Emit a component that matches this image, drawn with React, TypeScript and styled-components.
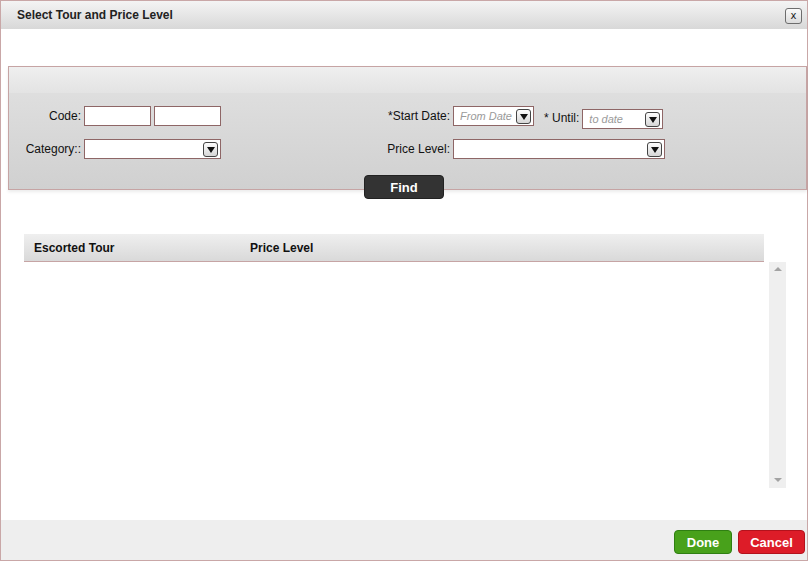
import React from "react";
import styled, { createGlobalStyle } from "styled-components";

const Global = createGlobalStyle`
  html, body { margin: 0; padding: 0; background: #fff; }
  body { font-family: "Liberation Sans", Arial, sans-serif; font-size: 12px; color: #000; }
  * { box-sizing: border-box; }
`;

const Dialog = styled.div`
  width: 808px;
  height: 561px;
  border: 1px solid #c9a7a7;
  display: flex;
  flex-direction: column;
  background: #fff;
`;

const TitleBar = styled.div`
  height: 28px;
  flex: none;
  display: flex;
  align-items: center;
  justify-content: space-between;
  padding: 0 5px 0 16px;
  background: linear-gradient(#f4f4f4, #d8d8d8);
`;

const Title = styled.span`
  font-weight: bold;
  font-size: 12px;
  color: #222;
`;

const CloseBtn = styled.button`
  width: 17px;
  height: 16px;
  margin-top: 1px;
  padding: 0;
  border: 1px solid #6d6d6d;
  border-radius: 3px;
  background: linear-gradient(#fafafa, #dcdcdc);
  font-family: "DejaVu Sans", sans-serif;
  font-size: 10px;
  line-height: 12px;
  color: #222;
  display: flex;
  align-items: center;
  justify-content: center;
`;

const Body = styled.div`
  flex: 1;
  padding: 37px 0 0 7px;
  display: flex;
  flex-direction: column;
`;

const Panel = styled.div`
  width: 799px;
  height: 124px;
  border: 1px solid #c6a4a4;
  background: linear-gradient(#e2e2e2, #d0d0d0);
  box-shadow: 0 2px 3px rgba(0, 0, 0, 0.08);
  display: flex;
  flex-direction: column;
`;

const PanelHead = styled.div`
  height: 26px;
  background: linear-gradient(#efefef, #e3e3e3);
`;

const Form = styled.div`
  display: grid;
  grid-template-columns: 72px 137px 136px 87px auto;
  grid-auto-rows: 20px;
  column-gap: 3px;
  row-gap: 13px;
  padding-top: 13px;
  align-items: center;
`;

const Label = styled.label`
  text-align: right;
  font-size: 12px;
  color: #111;
  white-space: nowrap;
`;

const Pair = styled.div`
  display: flex;
  gap: 3px;
`;

const Field = styled.div<{ $w: number; $dy?: number }>`
  flex: none;
  width: ${(p) => p.$w}px;
  height: 20px;
  border: 1px solid #8e6666;
  background: #fff;
  margin-top: ${(p) => p.$dy ?? 0}px;
  display: flex;
  align-items: center;
  padding: 0 0 0 6px;
`;

const Placeholder = styled.span`
  font-style: italic;
  color: #9a9a9a;
  font-size: 11px;
  flex: 1;
  white-space: nowrap;
  overflow: hidden;
`;

const DropBtn = styled.span`
  flex: none;
  width: 15px;
  height: 15px;
  margin-right: 2px;
  border: 1px solid #444;
  border-radius: 3px;
  background: linear-gradient(#fdfdfd, #d6d6d6);
  display: flex;
  align-items: center;
  justify-content: center;
  margin-left: auto;
  &::after {
    content: "";
    border-left: 4px solid transparent;
    border-right: 4px solid transparent;
    border-top: 6px solid #111;
    margin-top: 1px;
  }
`;

const DateGroup = styled.div`
  display: flex;
  align-items: flex-start;
  height: 20px;
`;

const UntilLabel = styled.label`
  margin: 5px 3px 0 10px;
  font-size: 12px;
  line-height: 14px;
  color: #111;
`;

const FindBtn = styled.button`
  align-self: flex-start;
  margin: -15px 0 0 356px;
  width: 80px;
  height: 24px;
  background: #333;
  border: 1px solid #222;
  border-radius: 4px;
  color: #fff;
  font-family: "Liberation Sans", Arial, sans-serif;
  font-weight: bold;
  font-size: 13px;
  padding: 0;
`;

const Grid = styled.div`
  margin: 35px 0 0 16px;
  width: 762px;
  display: flex;
  flex-direction: column;
`;

const GridHead = styled.div`
  width: 740px;
  height: 28px;
  background: linear-gradient(#efefef, #d9d9d9);
  border-bottom: 1px solid #c6a4a4;
  display: grid;
  grid-template-columns: 216px 1fr;
  align-items: center;
  padding-left: 10px;
`;

const HeadCell = styled.span`
  font-weight: bold;
  font-size: 12px;
  color: #111;
`;

const GridBody = styled.div`
  height: 226px;
  display: flex;
`;

const Rows = styled.div`
  flex: 1;
`;

const ScrollBar = styled.div`
  width: 17px;
  background: #efefef;
  display: flex;
  flex-direction: column;
  justify-content: space-between;
  align-items: center;
  padding: 5px 0 6px;
`;

const Arrow = styled.span<{ $up?: boolean }>`
  width: 0;
  height: 0;
  border-left: 4px solid transparent;
  border-right: 4px solid transparent;
  ${(p) =>
    p.$up ? "border-bottom: 4px solid #a3a3a3;" : "border-top: 4px solid #a3a3a3;"}
`;

const Footer = styled.div`
  height: 40px;
  flex: none;
  background: #eee;
  display: flex;
  justify-content: flex-end;
  gap: 6px;
  padding: 10px 2px 0 0;
`;

const ActionBtn = styled.button<{ $kind: "done" | "cancel" }>`
  height: 24px;
  width: ${(p) => (p.$kind === "done" ? 58 : 67)}px;
  border-radius: 4px;
  border: 1px solid ${(p) => (p.$kind === "done" ? "#2f7f12" : "#b3121c")};
  background: ${(p) => (p.$kind === "done" ? "#48a11b" : "#dd1c28")};
  color: #fff;
  font-family: "Liberation Sans", Arial, sans-serif;
  font-weight: bold;
  font-size: 13px;
  padding: 0;
`;

export default function App() {
  return (
    <>
      <Global />
      <Dialog>
        <TitleBar>
          <Title>Select Tour and Price Level</Title>
          <CloseBtn>x</CloseBtn>
        </TitleBar>
        <Body>
          <Panel>
            <PanelHead />
            <Form>
              <Label>Code:</Label>
              <Pair>
                <Field $w={67} />
                <Field $w={67} />
              </Pair>
              <span />
              <Label>*Start Date:</Label>
              <DateGroup>
                <Field $w={81}>
                  <Placeholder>From Date</Placeholder>
                  <DropBtn />
                </Field>
                <UntilLabel>* Until:</UntilLabel>
                <Field $w={81} $dy={3}>
                  <Placeholder>to date</Placeholder>
                  <DropBtn />
                </Field>
              </DateGroup>

              <Label>Category::</Label>
              <Field $w={137}>
                <DropBtn />
              </Field>
              <span />
              <Label>Price Level:</Label>
              <Field $w={212}>
                <DropBtn />
              </Field>
            </Form>
          </Panel>
          <FindBtn>Find</FindBtn>
          <Grid>
            <GridHead>
              <HeadCell>Escorted Tour</HeadCell>
              <HeadCell>Price Level</HeadCell>
            </GridHead>
            <GridBody>
              <Rows />
              <ScrollBar>
                <Arrow $up />
                <Arrow />
              </ScrollBar>
            </GridBody>
          </Grid>
        </Body>
        <Footer>
          <ActionBtn $kind="done">Done</ActionBtn>
          <ActionBtn $kind="cancel">Cancel</ActionBtn>
        </Footer>
      </Dialog>
    </>
  );
}
